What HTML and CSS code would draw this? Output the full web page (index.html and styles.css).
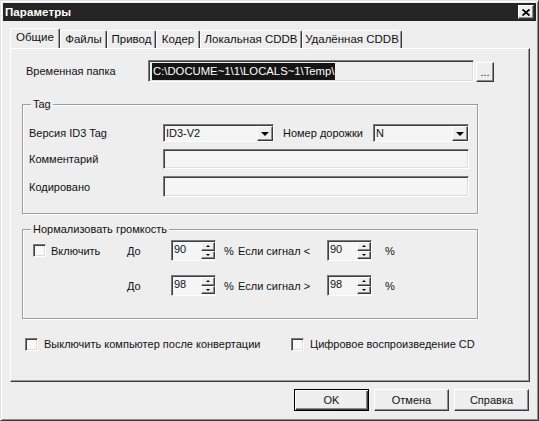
FILE: index.html
```html
<!DOCTYPE html>
<html lang="ru">
<head>
<meta charset="utf-8">
<title>Параметры</title>
<link rel="stylesheet" href="styles.css">
</head>
<body>
<div class="window">
  <div class="titlebar">
    <span class="title">Параметры</span>
    <span class="close"><svg width="8" height="7" viewBox="0 0 8 7"><path d="M0.5 0.5 L7.5 6.5 M7.5 0.5 L0.5 6.5" stroke="#000" stroke-width="1.8" fill="none"/></svg></span>
  </div>
  <div class="client">
    <div class="tabs">
      <div class="tab active t1">Общие</div>
      <div class="tab t2">Файлы</div>
      <div class="tab t3">Привод</div>
      <div class="tab t4">Кодер</div>
      <div class="tab t5">Локальная CDDB</div>
      <div class="tab t6">Удалённая CDDB</div>
    </div>
    <div class="panel">
      <div class="row folder">
        <span class="lbl w-folder">Временная папка</span>
        <div class="field path"><span class="sel">C:\DOCUME~1\1\LOCALS~1\Temp\</span></div>
        <div class="btn dots">...</div>
      </div>

      <div class="group tag">
        <span class="legend">Tag</span>
        <div class="row r1">
          <span class="lbl w1">Версия ID3 Tag</span>
          <div class="combo c1"><span class="ctext">ID3-V2</span><span class="drop"><i class="tri-down"></i></span></div>
          <span class="lbl w2">Номер дорожки</span>
          <div class="combo c2"><span class="ctext">N</span><span class="drop"><i class="tri-down"></i></span></div>
        </div>
        <div class="row r2">
          <span class="lbl w1">Комментарий</span>
          <div class="field wide h20"></div>
        </div>
        <div class="row r3">
          <span class="lbl w1">Кодировано</span>
          <div class="field wide h21"></div>
        </div>
      </div>

      <div class="group norm">
        <span class="legend">Нормализовать громкость</span>
        <div class="nrow first">
          <span class="cbcell"><span class="check"></span><span class="cbtext">Включить</span></span>
          <span class="do">До</span>
          <div class="spin"><span class="num">90</span><span class="arrows"><span class="ab"><i class="tri-up"></i></span><span class="ab"><i class="tri-dn"></i></span></span></div>
          <span class="pct">%</span>
          <span class="cond">Если сигнал &lt;</span>
          <div class="spin"><span class="num">90</span><span class="arrows"><span class="ab"><i class="tri-up"></i></span><span class="ab"><i class="tri-dn"></i></span></span></div>
          <span class="pct2">%</span>
        </div>
        <div class="nrow second">
          <span class="cbcell"></span>
          <span class="do">До</span>
          <div class="spin"><span class="num">98</span><span class="arrows"><span class="ab"><i class="tri-up"></i></span><span class="ab"><i class="tri-dn"></i></span></span></div>
          <span class="pct">%</span>
          <span class="cond">Если сигнал &gt;</span>
          <div class="spin"><span class="num">98</span><span class="arrows"><span class="ab"><i class="tri-up"></i></span><span class="ab"><i class="tri-dn"></i></span></span></div>
          <span class="pct2">%</span>
        </div>
      </div>

      <div class="row checks">
        <span class="cb1"><span class="check"></span><span class="cbtext2">Выключить компьютер после конвертации</span></span>
        <span class="cb2"><span class="check"></span><span class="cbtext2">Цифровое воспроизведение CD</span></span>
      </div>
    </div>

    <div class="buttons">
      <div class="btn push default">OK</div>
      <div class="btn push">Отмена</div>
      <div class="btn push">Справка</div>
    </div>
  </div>
</div>
</body>
</html>
```

FILE: styles.css
```css
* { box-sizing: border-box; }
html, body { margin: 0; padding: 0; }
body {
  background: #eeeeee;
  font-family: "Liberation Sans", Arial, sans-serif;
  font-size: 11px;
  color: #111;
}
.window {
  width: 539px;
  height: 421px;
  background: #eeeeee;
  border: 1px solid;
  border-color: #e2e2e2 #3a3a3a #3a3a3a #e2e2e2;
  box-shadow: inset 1px 1px 0 #ffffff, inset -1px -1px 0 #8c8c8c;
  padding: 2px;
  display: flex;
  flex-direction: column;
}
.titlebar {
  height: 18px;
  background: #242424;
  display: flex;
  align-items: center;
  justify-content: space-between;
  padding: 0 2px 0 2px;
}
.title { color: #fff; font-weight: bold; font-size: 11.5px; letter-spacing: 0.1px; }
.close {
  width: 16px;
  height: 14px;
  background: #eeeeee;
  border: 1px solid;
  border-color: #ffffff #3a3a3a #3a3a3a #ffffff;
  box-shadow: inset -1px -1px 0 #8c8c8c;
  display: flex;
  align-items: center;
  justify-content: center;
}
.client { padding: 7px 6px 0 7px; }

.tabs { display: flex; align-items: flex-end; height: 20px; }
.tab {
  height: 18px;
  line-height: 16px;
  text-align: center;
  border-top: 1px solid #ffffff;
  border-left: 1px solid #ffffff;
  border-right: 1px solid #3a3a3a;
  box-shadow: inset -1px 0 0 #9a9a9a;
  border-radius: 2px 2px 0 0;
  white-space: nowrap;
  font-size: 11.5px;
}
.tab.active { height: 20px; line-height: 17px; }
.t1 { width: 50px; }
.t2 { width: 47px; }
.t3 { width: 49px; }
.t4 { width: 44px; }
.t5 { width: 102px; }
.t6 { width: 100px; }

.panel {
  height: 334px;
  border: 1px solid;
  border-color: #ffffff #3a3a3a #3a3a3a #ffffff;
  box-shadow: inset -1px -1px 0 #9a9a9a;
}
.row { display: flex; align-items: center; }
.lbl { white-space: nowrap; }

.folder { margin-top: 11px; padding-left: 15px; height: 22px; }
.w-folder { width: 122px; }
.field {
  background: #f5f5f5;
  border: 1px solid;
  border-color: #7a7a7a #ffffff #ffffff #7a7a7a;
  box-shadow: inset 1px 1px 0 #404040, inset -1px -1px 0 #dedede;
}
.path { width: 326px; height: 22px; background: #eeeeee; padding: 2px 0 0 3px; display: flex; align-items: flex-start; }
.sel { background: #151515; color: #fff; line-height: 17px; padding: 0 1px; font-size: 11.3px; }
.btn {
  background: #eeeeee;
  border: 1px solid;
  border-color: #ffffff #3a3a3a #3a3a3a #ffffff;
  box-shadow: inset -1px -1px 0 #8c8c8c;
  display: flex;
  align-items: center;
  justify-content: center;
}
.dots { width: 18px; height: 20px; margin-left: 2px; align-self: flex-end; font-size: 11px; }

.group {
  position: relative;
  margin-left: 11px;
  width: 456px;
  border: 1px solid #9c9c9c;
  box-shadow: inset 1px 1px 0 #ffffff, 1px 1px 0 #ffffff;
}
.legend {
  position: absolute;
  top: -8px;
  left: 8px;
  background: #eeeeee;
  padding: 0 2px;
  line-height: 14px;
}
.tag { margin-top: 22px; height: 110px; }
.tag .row { padding-left: 6px; }
.r1 { margin-top: 19px; height: 18px; }
.r2 { margin-top: 7px; height: 20px; }
.r3 { margin-top: 7px; height: 21px; }
.w1 { width: 134px; }
.w2 { width: 90px; margin-left: 9px; }
.combo {
  height: 18px;
  background: #f5f5f5;
  border: 1px solid;
  border-color: #7a7a7a #ffffff #ffffff #7a7a7a;
  box-shadow: inset 1px 1px 0 #404040;
  display: flex;
  align-items: center;
  justify-content: space-between;
  padding: 1px 0 0 2px;
}
.c1 { width: 111px; }
.c2 { width: 96px; }
.ctext { line-height: 15px; }
.drop {
  width: 16px;
  height: 15px;
  background: #eeeeee;
  border: 1px solid;
  border-color: #ffffff #3a3a3a #3a3a3a #ffffff;
  box-shadow: inset -1px -1px 0 #8c8c8c;
  display: flex;
  align-items: center;
  justify-content: center;
}
.tri-down {
  width: 0; height: 0;
  border-left: 4px solid transparent;
  border-right: 4px solid transparent;
  border-top: 4px solid #000;
}
.wide { width: 306px; }
.h20 { height: 20px; }
.h21 { height: 21px; }

.norm { margin-top: 15px; height: 90px; }
.nrow { display: flex; align-items: center; height: 21px; padding-left: 10px; }
.nrow.first { margin-top: 10px; }
.nrow.second { margin-top: 14px; }
.cbcell { width: 94px; display: flex; align-items: center; }
.check {
  width: 13px; height: 13px;
  background: #f8f8f8;
  border: 1px solid;
  border-color: #7a7a7a #ffffff #ffffff #7a7a7a;
  box-shadow: inset 1px 1px 0 #404040, inset -1px -1px 0 #dedede;
  flex: none;
}
.cbtext { margin-left: 5px; }
.do { width: 44px; }
.spin {
  width: 45px;
  height: 21px;
  background: #f5f5f5;
  border: 1px solid;
  border-color: #7a7a7a #ffffff #ffffff #7a7a7a;
  box-shadow: inset 1px 1px 0 #404040;
  display: flex;
  justify-content: space-between;
  padding: 1px 0 1px 2px;
}
.num { line-height: 15px; }
.arrows { width: 14px; display: flex; flex-direction: column; }
.ab {
  flex: 1;
  background: #eeeeee;
  border: 1px solid;
  border-color: #ffffff #3a3a3a #3a3a3a #ffffff;
  box-shadow: inset -1px -1px 0 #8c8c8c;
  display: flex;
  align-items: center;
  justify-content: center;
}
.tri-up {
  width: 0; height: 0;
  border-left: 2px solid transparent;
  border-right: 2px solid transparent;
  border-bottom: 2px solid #000;
}
.tri-dn {
  width: 0; height: 0;
  border-left: 2px solid transparent;
  border-right: 2px solid transparent;
  border-top: 2px solid #000;
}
.pct { width: 22px; padding-left: 8px; }
.cond { width: 89px; white-space: nowrap; }
.pct2 { padding-left: 13px; }

.checks { margin-top: 17px; height: 16px; padding-left: 14px; }
.cb1 { width: 266px; display: flex; align-items: center; }
.cb2 { display: flex; align-items: center; }
.cbtext2 { margin-left: 6px; white-space: nowrap; }

.buttons {
  display: flex;
  justify-content: flex-end;
  gap: 5px;
  margin-top: 7px;
  margin-right: 1px;
}
.push { width: 75px; height: 22px; }
.default {
  border: 1px solid #000;
  box-shadow: inset 1px 1px 0 #ffffff, inset -1px -1px 0 #3a3a3a, inset -2px -2px 0 #8c8c8c;
}
```
